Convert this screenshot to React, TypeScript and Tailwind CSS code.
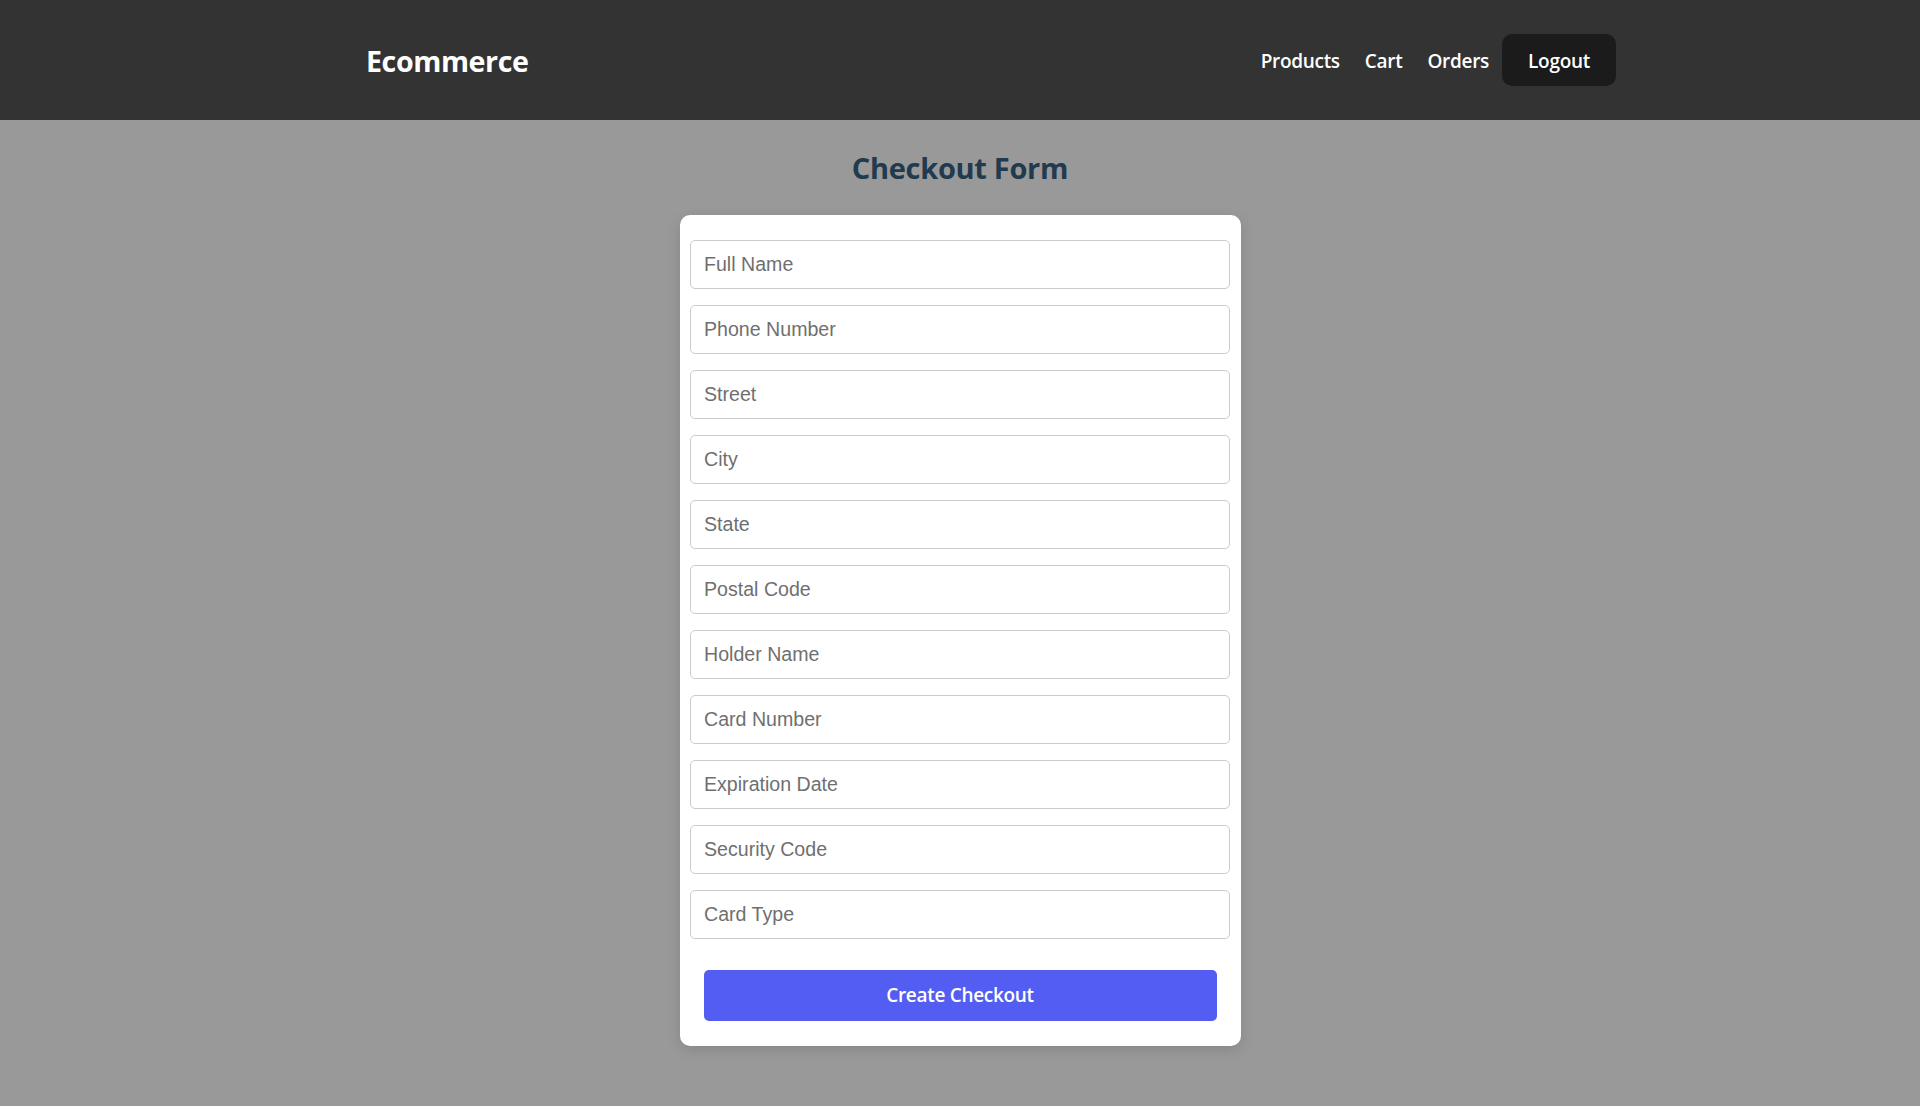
import React from "react";

const fields = [
  "Full Name",
  "Phone Number",
  "Street",
  "City",
  "State",
  "Postal Code",
  "Holder Name",
  "Card Number",
  "Expiration Date",
  "Security Code",
  "Card Type",
];

export default function App() {
  return (
    <div className="min-h-[1106px] bg-[#999999]" style={{ fontFamily: '"Open Sans", "Noto Sans", sans-serif' }}>
      <header className="h-[120px] bg-[#333333] flex items-center justify-between pl-[366px] pr-[304px]">
        <div className="text-white font-bold text-[28.6px] tracking-[-0.4px] mt-[2px]">Ecommerce</div>
        <nav className="flex items-center">
          <a className="text-white font-semibold text-[19px] tracking-[-0.3px] mr-[25px] mt-[2px]">Products</a>
          <a className="text-white font-semibold text-[19px] tracking-[-0.3px] mr-[25px] mt-[2px]">Cart</a>
          <a className="text-white font-semibold text-[19px] tracking-[-0.3px] mr-[13px] mt-[2px]">Orders</a>
          <button className="h-[52px] w-[114px] rounded-[10px] bg-[#1b1b1b] text-white font-semibold text-[19px] tracking-[-0.3px] pt-[2px]">
            Logout
          </button>
        </nav>
      </header>
      <main className="flex flex-col items-center">
        <h1 className="mt-[30px] leading-[35px] text-[29px] font-bold text-[#223a4e] tracking-[-0.3px]">Checkout Form</h1>
        <form className="mt-[30px] w-[561px] bg-white rounded-[10px] px-[10.5px] pt-[24.5px] pb-[25px] flex flex-col shadow-[0_4px_14px_rgba(0,0,0,0.12)]">
          <div className="flex flex-col gap-[16px]">
            {fields.map((f) => (
              <input
                key={f}
                placeholder={f}
                className="h-[49px] w-full border border-[#cccccc] rounded-[5px] px-[13px] text-[19.6px] text-[#333] placeholder:text-[#6f6f6f] outline-none"
                style={{ fontFamily: '"Liberation Sans", Arial, sans-serif' }}
              />
            ))}
          </div>
          <button
            type="button"
            className="mt-[31px] mx-[13.5px] h-[51px] rounded-[5px] bg-[#545df2] text-white font-semibold text-[19px] tracking-[-0.3px]"
          >
            Create Checkout
          </button>
        </form>
      </main>
    </div>
  );
}
